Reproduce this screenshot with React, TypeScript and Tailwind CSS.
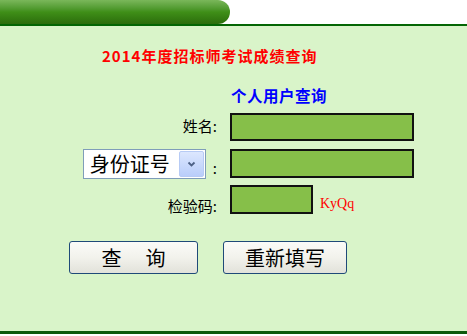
import React from 'react';

const cjk = { fontFamily: '"Noto Sans CJK SC", "Noto Sans", sans-serif' };

function SelectBox() {
  return (
    <div className="flex h-[30px] w-[123px] items-center border border-[#7f9db9] bg-white pl-[6px] pr-[1px]">
      <span className="flex-1 text-[20px] leading-none text-black" style={cjk}>
        身份证号
      </span>
      <span className="flex h-[26px] w-[25px] items-center justify-center rounded-[2px] border border-[#b7cbf5] bg-gradient-to-b from-[#dce7fe] to-[#b9cdfa]">
        <svg width="9" height="6" viewBox="0 0 9 6">
          <path d="M1.5 1.5 L4.5 4.5 L7.5 1.5" stroke="#4d6185" strokeWidth="1.8" fill="none" />
        </svg>
      </span>
    </div>
  );
}

function Btn({ children, width }: { children: React.ReactNode; width: string }) {
  return (
    <button
      className={`flex h-[33px] ${width} items-center justify-center rounded-[3px] border border-[#1f4a78] bg-gradient-to-b from-[#fbfbf8] via-[#f2f2ec] to-[#e2e2da] text-[20px] leading-none text-black`}
      style={cjk}
    >
      {children}
    </button>
  );
}

export default function App() {
  return (
    <div className="w-[467px] h-[336px] overflow-hidden bg-white" style={cjk}>
      <div className="border-b-2 border-[#046604]">
        <div className="h-[24px] w-[230px] rounded-r-[14px] bg-gradient-to-b from-[#7ab75a] via-[#3f8f18] to-[#2c6d0c]" />
      </div>
      <div className="flex h-[308px] flex-col border-b-[3px] border-[#0d5a0d] bg-[#d9f4c9]">
        <div className="mt-[20px] pl-[102px] text-[15px] font-bold leading-[20px] tracking-[1px] text-[#ff0000]">
          2014年度招标师考试成绩查询
        </div>
        <div className="mt-[19px] pl-[231px] text-[15.5px] font-bold leading-[20px] tracking-[0.5px] text-[#0000ff]">
          个人用户查询
        </div>

        <div className="mt-[8px] flex items-center">
          <div className="mb-[3px] w-[217px] text-right text-[15px] leading-none text-black">姓名:</div>
          <div className="ml-[13px] h-[28px] w-[184px] border-2 border-[#111] bg-[#86bf49]" />
        </div>

        <div className="mt-[8px] flex items-start">
          <div className="flex w-[217px] items-end justify-end">
            <SelectBox />
            <span className="mb-[4px] ml-[7px] text-[15px] leading-none text-black">:</span>
          </div>
          <div className="ml-[13px] h-[29px] w-[184px] border-2 border-[#111] bg-[#86bf49]" />
        </div>

        <div className="mt-[6px] flex items-end">
          <div className="mb-[1px] w-[217px] text-right text-[15px] leading-none text-black">检验码:</div>
          <div className="ml-[13px] h-[29px] w-[83px] border-2 border-[#111] bg-[#86bf49]" />
          <span
            className="mb-[3px] ml-[7px] text-[14px] leading-none text-[#ff0000]"
            style={{ fontFamily: '"Liberation Serif", serif' }}
          >
            KyQq
          </span>
        </div>

        <div className="mt-[27px] flex pl-[69px]">
          <Btn width="w-[129px]">
            <span>查</span>
            <span className="ml-[24px]">询</span>
          </Btn>
          <div className="ml-[25px]">
            <Btn width="w-[124px]">重新填写</Btn>
          </div>
        </div>
      </div>
    </div>
  );
}
